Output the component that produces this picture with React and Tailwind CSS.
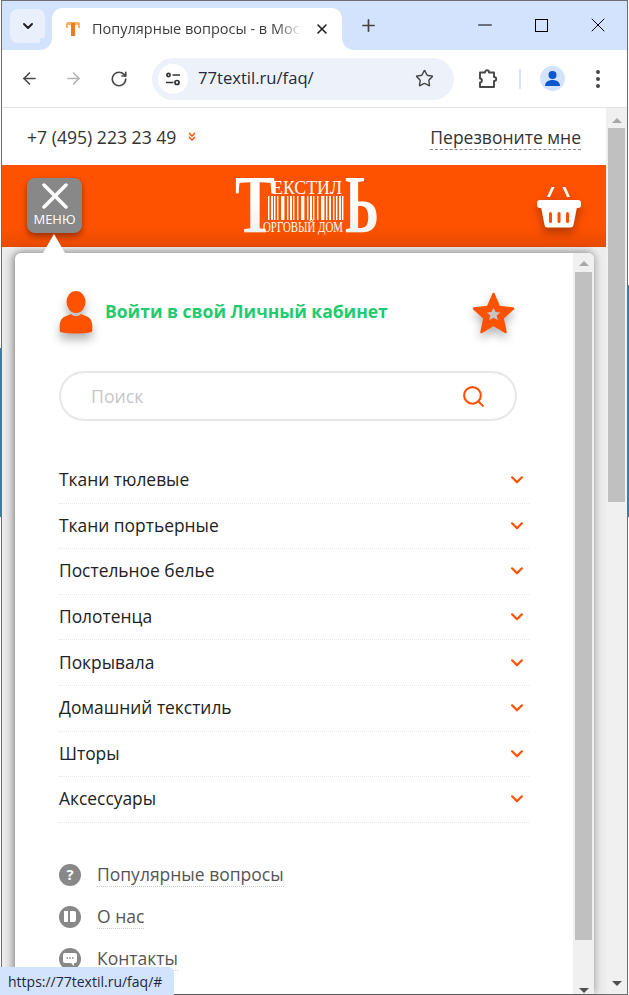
import { ArrowLeft, ArrowRight, ChevronDown, Minus, Plus, RotateCw, Search, Star, X } from "lucide-react"

const categories = [
  "Ткани тюлевые",
  "Ткани портьерные",
  "Постельное белье",
  "Полотенца",
  "Покрывала",
  "Домашний текстиль",
  "Шторы",
  "Аксессуары",
]

function ThinChevron({ className }) {
  return (
    <svg className={className} viewBox="0 0 14 9" fill="none" stroke="#ff5200" strokeWidth="2.5" strokeLinecap="round" strokeLinejoin="round">
      <path d="M1.500 1.500 7 7l5.500-5.500" />
    </svg>
  )
}

function Logo() {
  const bars = [0, 3, 6, 9, 13, 15, 19, 22, 25, 29, 33, 35, 39, 42, 45, 49, 53, 55, 58, 61, 65, 68, 71, 74]
  return (
    <svg className="mt-[-12px] h-[100px] w-[145px] shrink-0" viewBox="0 -25 145 100" style={{ fontFamily: "'Liberation Serif', serif" }}>
      <defs>
        <linearGradient id="logoFill" x1="0" y1="0" x2="0" y2="1">
          <stop offset="0.45" stopColor="#ffffff" />
          <stop offset="1" stopColor="#e9e9e9" />
        </linearGradient>
      </defs>
      <text x="0" y="54" fontSize="82" fontWeight="700" fill="url(#logoFill)" textLength="40" lengthAdjust="spacingAndGlyphs">Т</text>
      <text x="37" y="16" fontSize="19" fill="#fff" textLength="70" lengthAdjust="spacingAndGlyphs">ЕКСТИЛ</text>
      {bars.map((x, i) => (
        <rect key={x} x={33 + x} y="18" width={i % 3 === 1 ? 2 : 1.4} height="24" fill="#fff" />
      ))}
      <text x="28" y="54" fontSize="15" fill="#fff" textLength="80" lengthAdjust="spacingAndGlyphs">ОРГОВЫЙ ДОМ</text>
      <text x="110" y="54" fontSize="82" fontWeight="700" fill="url(#logoFill)" textLength="34" lengthAdjust="spacingAndGlyphs">Ь</text>
    </svg>
  )
}

function Basket() {
  return (
    <svg className="mt-[21px] ml-auto h-[42px] w-[45px] shrink-0 drop-shadow-[0_5px_5px_rgba(0,0,0,0.3)]" viewBox="0 0 45 42" fill="#fff">
      <path d="M11 11 15.500 1h3L14 11zM34 11 29.500 1h-3L31 11z" />
      <rect x="1" y="14" width="44" height="8" rx="3" />
      <path d="M5 21h36l-3.500 18a3 3 0 0 1-3 2.500H11.500a3 3 0 0 1-3-2.500z" />
      <g fill="#ff5200">
        <rect x="13" y="26" width="3" height="11" rx="1.500" />
        <rect x="21.500" y="26" width="3" height="11" rx="1.500" />
        <rect x="30" y="26" width="3" height="11" rx="1.500" />
      </g>
    </svg>
  )
}

function TabCorner({ side }) {
  return (
    <div className={`absolute bottom-0 h-3 w-3 bg-white ${side === "left" ? "-left-3" : "-right-3"}`}>
      <div className={`h-3 w-3 bg-[#d3e3fd] ${side === "left" ? "rounded-br-[12px]" : "rounded-bl-[12px]"}`} />
    </div>
  )
}

function BrowserChrome() {
  return (
    <>
      <div className="flex h-[49px] shrink-0 bg-[#d3e3fd] pt-[7px]">
        <div className="mt-px ml-[8px] flex h-[34px] w-[35px] items-center justify-center rounded-lg bg-[#e9f0fc]">
          <ChevronDown size={16} strokeWidth={3} className="text-[#1f1f1f]" />
        </div>
        <div className="relative ml-[7px] flex h-[42px] w-[290px] items-center rounded-t-[10px] bg-white pl-[13px]">
          <TabCorner side="left" />
          <TabCorner side="right" />
          <svg className="h-4 w-4 shrink-0" viewBox="0 0 16 16">
            <rect x="1" y="1" width="14" height="3" rx="1.500" fill="#f7b267" />
            <rect x="6" y="2" width="4" height="13" fill="#f07a1a" />
            <path d="M2 3v4M14 3v4" stroke="#f7b267" strokeWidth="2" />
          </svg>
          <span className="ml-[11px] w-[210px] overflow-hidden text-[14.5px] whitespace-nowrap text-[#3c3c3c] [mask-image:linear-gradient(to_right,black_88%,transparent)]">
            Популярные вопросы - в Моск
          </span>
          <X size={16} strokeWidth={2.4} className="ml-[12px] text-[#1f1f1f]" />
        </div>
        <Plus size={19} strokeWidth={2.2} className="mt-[8px] ml-[17px] text-[#444]" />
        <Minus size={22} strokeWidth={1.1} className="mt-[6px] ml-[96px] text-black" />
        <div className="mt-[11px] ml-[39px] h-[13px] w-[13px] border border-black" />
        <X size={24} strokeWidth={1} className="mt-[5px] ml-[38px] text-black" />
      </div>
      <div className="flex h-[58px] shrink-0 items-center rounded-t-[10px] border-b border-[#e3e3e3] bg-white pl-[18px]">
        <ArrowLeft size={19} strokeWidth={2} className="text-[#474747]" />
        <ArrowRight size={19} strokeWidth={2} className="ml-[25px] text-[#b4b4b4]" />
        <RotateCw size={18} strokeWidth={2.2} className="ml-[27px] text-[#474747]" />
        <div className="ml-[24px] flex h-[42px] w-[302px] items-center rounded-full bg-[#edf2fa] pl-[6px]">
          <div className="flex h-[30px] w-[30px] items-center justify-center rounded-full bg-white">
            <svg className="h-4 w-4" viewBox="0 0 16 16" fill="none" stroke="#333" strokeWidth="1.700">
              <circle cx="3.500" cy="4" r="1.600" />
              <path d="M7.500 4H15M1 11.500h7.500" />
              <circle cx="12" cy="11.500" r="2" />
            </svg>
          </div>
          <span className="ml-[10px] text-[16.6px] text-[#1f2937]">77textil.ru/faq/</span>
          <Star size={19} strokeWidth={1.8} className="ml-[101px] text-[#474747]" />
        </div>
        <svg className="ml-[24px] h-5 w-5" viewBox="0 0 20 20" fill="none" stroke="#474747" strokeWidth="1.900" strokeLinejoin="round">
          <path d="M2 3.500h5c0-3 4-3 4 0h5v4.500c3 0 3 4 0 4v6H2v-4.500c2.500 0 2.500-4 0-4z" />
        </svg>
        <div className="ml-[21px] h-[20px] w-[2px] bg-[#d3e3fd]" />
        <div className="ml-[19px] flex h-[25px] w-[25px] items-center justify-center rounded-full bg-[#d3e3fd]">
          <svg className="h-[17px] w-[17px]" viewBox="0 0 17 17" fill="#0b57d0">
            <circle cx="8.500" cy="5" r="4" />
            <path d="M1 16c0-4 3.500-6 7.500-6s7.500 2 7.500 6z" />
          </svg>
        </div>
        <div className="ml-[31px] flex flex-col gap-[3px]">
          <div className="h-[4px] w-[4px] rounded-full bg-[#474747]" />
          <div className="h-[4px] w-[4px] rounded-full bg-[#474747]" />
          <div className="h-[4px] w-[4px] rounded-full bg-[#474747]" />
        </div>
      </div>
    </>
  )
}

function Arrow({ up, className }) {
  return (
    <div className={`h-0 w-0 border-x-[5px] border-x-transparent ${up ? "border-b-[5px] border-b-[#a8a8a8]" : "border-t-[5px] border-t-[#505050]"} ${className}`} />
  )
}

function InfoIcon({ type }) {
  return (
    <div className="flex h-[22px] w-[22px] shrink-0 items-center justify-center rounded-full bg-[#888] text-white">
      {type === "faq" && <span className="text-[15px] leading-none font-bold">?</span>}
      {type === "about" && (
        <div className="flex gap-[2px]">
          <div className="h-[11px] w-[4px] bg-white" />
          <div className="h-[11px] w-[6px] rounded-r-[2px] bg-white" />
        </div>
      )}
      {type === "contacts" && (
        <svg className="h-[14px] w-[14px]" viewBox="0 0 14 14">
          <path d="M2 1h10a2 2 0 0 1 2 2v6a2 2 0 0 1-2 2h-1v3l-3-3H2a2 2 0 0 1-2-2V3a2 2 0 0 1 2-2z" fill="#fff" />
          <path d="M3.500 6h1.500M6.300 6h1.500M9 6h1.500" stroke="#888" strokeWidth="1.500" />
        </svg>
      )}
    </div>
  )
}

function Panel() {
  return (
    <div className="flex min-h-0 flex-1 overflow-hidden rounded-t-md bg-white shadow-[-3px_0_10px_rgba(0,0,0,0.32),3px_0_8px_rgba(0,0,0,0.1),0_-2px_6px_rgba(0,0,0,0.1)]">
      <div className="min-w-0 flex-1 pt-[37px] pr-[30px] pl-[44px]">
        <div className="flex items-center">
          <svg className="h-[43px] w-[34px] shrink-0 drop-shadow-[0_6px_5px_rgba(0,0,0,0.3)]" viewBox="0 0 34 43" fill="#ff5200">
            <ellipse cx="17" cy="11" rx="9.500" ry="11" />
            <path d="M1 41c-1-7 0-13 4-15l7-3c3 3 7 3 10 0l7 3c4 2 5 8 4 15-10 2-22 2-32 0z" />
          </svg>
          <span className="mb-[2px] ml-[12px] text-[17.5px] font-bold text-[#1fcb6c]">Войти в свой Личный кабинет</span>
          <svg className="mt-[2px] mr-[28px] ml-auto h-[42px] w-[43px] shrink-0 drop-shadow-[0_5px_5px_rgba(0,0,0,0.3)]" viewBox="0 0 43 42">
            <path d="M21.500 2 27 15l14 1.500-10.500 9.500 3 14-12-7.200L9.500 40l3-14L2 16.500 16 15z" fill="#ff5200" stroke="#ff5200" strokeWidth="2.500" strokeLinejoin="round" />
            <path d="M21.500 15.500 23.500 20l4.800.4-3.600 3.200 1.100 4.700-4.300-2.500-4.300 2.500 1.100-4.700-3.600-3.200 4.800-.4z" fill="#c4c4c4" />
          </svg>
        </div>
        <div className="mt-[37px] flex h-[50px] w-[458px] items-center justify-between rounded-full border-2 border-[#e7e7e7] pr-[29px] pl-[30px]">
          <span className="text-[17.7px] text-[#c6c6c6]">Поиск</span>
          <Search size={25} strokeWidth={2} className="text-[#ff5200]" />
        </div>
        <ul className="mt-[37px] w-[470px]">
          {categories.map((name) => (
            <li key={name} className="flex h-[45.6px] items-center justify-between border-b border-dotted border-[#e6e6e6] pr-[5px] pb-[2px] text-[17.4px] text-[#222]">
              {name}
              <ThinChevron className="mt-[2px] h-[8px] w-[14px]" />
            </li>
          ))}
        </ul>
        <div className="mt-[39px] flex flex-col gap-[16px] text-[17.5px] text-[#555]">
          <div className="flex h-[26px] items-center gap-[16px]">
            <InfoIcon type="faq" />
            <span className="border-b border-dotted border-[#ccc] leading-[24px]">Популярные вопросы</span>
          </div>
          <div className="flex h-[26px] items-center gap-[16px]">
            <InfoIcon type="about" />
            <span className="border-b border-dotted border-[#ccc] leading-[24px]">О нас</span>
          </div>
          <div className="flex h-[26px] items-center gap-[16px]">
            <InfoIcon type="contacts" />
            <span className="border-b border-dotted border-[#ccc] leading-[24px]">Контакты</span>
          </div>
        </div>
      </div>
      <div className="flex w-[21px] shrink-0 flex-col items-center bg-[#f0f0f0] pt-[8px] pb-px">
        <Arrow up />
        <div className="mt-[6px] h-[668px] w-[17px] bg-[#c0c0c0]" />
        <Arrow className="mt-auto" />
      </div>
    </div>
  )
}

export default function App() {
  return (
    <div className="relative flex h-[995px] w-[629px] overflow-hidden bg-white" style={{ fontFamily: "'Open Sans', sans-serif" }}>
      <div className="w-px shrink-0 bg-[linear-gradient(to_bottom,#fff_0,#fff_348px,#2f7fa8_348px,#2f7fa8_517px,#fff_517px)]" />
      <div className="flex h-full w-[627px] shrink-0 flex-col border border-[#6e6e6e]">
        <BrowserChrome />
        <div className="flex min-h-0 flex-1">
          <div className="relative flex min-w-0 flex-1 flex-col bg-[#ededed]">
            <div className="flex h-[57px] shrink-0 items-center justify-between bg-white px-[25px] pt-px">
              <div className="flex items-center">
                <span className="text-[17.6px] text-[#333]">+7 (495) 223 23 49</span>
                <svg className="ml-[12px] h-[10px] w-[8px]" viewBox="0 0 8 10" fill="none" stroke="#ff5200" strokeWidth="1.500">
                  <path d="M1 1l3 3 3-3M1 5l3 3 3-3" />
                </svg>
              </div>
              <span className="border-b border-dashed border-[#888] text-[17.5px] leading-[24px] text-[#333]">Перезвоните мне</span>
            </div>
            <div className="flex h-[82px] shrink-0 bg-[linear-gradient(to_bottom,#ff5200_75%,#e84b00)] px-[25px]">
              <div className="mt-[13px] flex h-[55px] w-[55px] shrink-0 flex-col items-center rounded-lg bg-[#888] shadow-[0_3px_6px_rgba(0,0,0,0.4)]">
                <svg className="mt-[5px] h-[26px] w-[26px]" viewBox="0 0 26 26" fill="none" stroke="#fff" strokeWidth="3.500" strokeLinecap="round">
                  <path d="M2 2l22 22M24 2 2 24" />
                </svg>
                <span className="mt-[3px] text-[13px] leading-[14px] text-white">МЕНЮ</span>
              </div>
              <div className="ml-[153px]"><Logo /></div>
              <Basket />
            </div>
            <div className="flex min-h-0 flex-1 flex-col pt-[6px] pr-[12px] pl-[13px]">
              <Panel />
            </div>
            <div className="absolute top-[126px] left-[41px] h-0 w-0 border-x-[11px] border-b-[19px] border-x-transparent border-b-white" />
          </div>
          <div className="flex w-[21px] shrink-0 flex-col items-center bg-[#f0f0f0] pt-[10px] pb-[8px]">
            <Arrow up />
            <div className="mt-[5px] h-[374px] w-[17px] bg-[#c0c0c0]" />
            <Arrow className="mt-auto" />
          </div>
        </div>
      </div>
      <div className="w-px shrink-0 bg-[linear-gradient(to_bottom,#fff_0,#fff_285px,#2f7fa8_285px,#2f7fa8_517px,#fff_517px)]" />
      <div className="absolute bottom-0 left-0 flex h-[28px] w-[174px] items-center rounded-tr-md bg-[#d3e3fd] pl-[8px] text-[14px] whitespace-nowrap text-[#1f2937]">
        https://77textil.ru/faq/#
      </div>
    </div>
  )
}
